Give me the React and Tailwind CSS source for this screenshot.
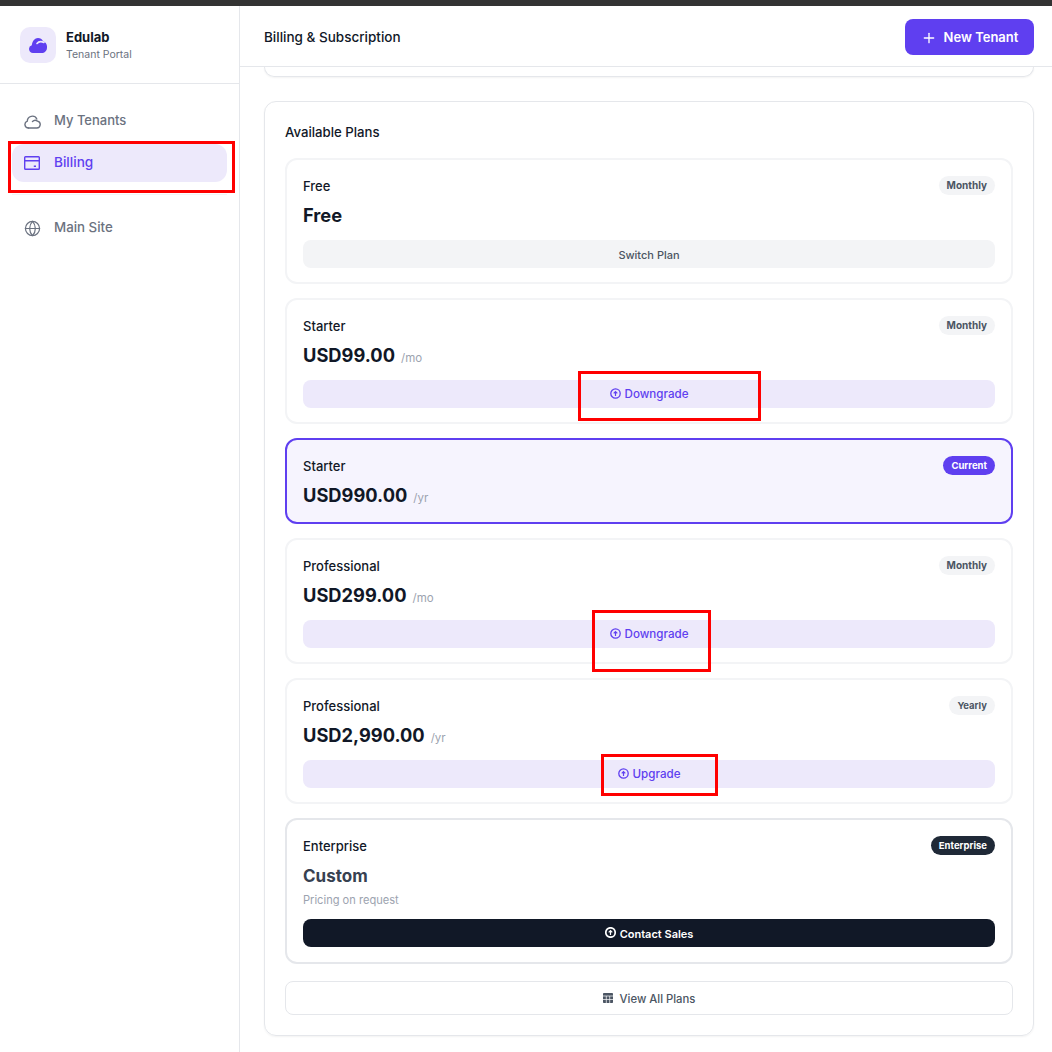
import { Globe, Plus } from 'lucide-react';

const plans = [
  { name: 'Free', price: 'Free', badge: 'Monthly', action: 'Switch Plan' },
  { name: 'Starter', price: 'USD99.00', per: '/mo', badge: 'Monthly', action: 'Downgrade' },
  { name: 'Starter', price: 'USD990.00', per: '/yr', badge: 'Current', current: true },
  { name: 'Professional', price: 'USD299.00', per: '/mo', badge: 'Monthly', action: 'Downgrade' },
  { name: 'Professional', price: 'USD2,990.00', per: '/yr', badge: 'Yearly', action: 'Upgrade' },
];

function LogoCloud() {
  return (
    <svg width="18" height="16" viewBox="0 0 18 16" className="text-[#5f3ff0]">
      <path fill="currentColor" d="M4 16a4 4 0 0 1-1.2-7.8C3.4 4 5.8 1 9 1c2.200 0 4 1.200 5 3.200A5.900 5.900 0 0 1 18 10a6 6 0 0 1-4 6z" />
      <path fill="none" stroke="#ede9fb" strokeWidth="1.6" strokeLinecap="round" d="M8 6.500C9.500 4.500 12 4 15 5.500" />
    </svg>
  );
}

function CloudOutline() {
  return (
    <svg width="17" height="15" viewBox="0 0 17 15" fill="none" stroke="#6b7280" strokeWidth="1.4" strokeLinecap="round" strokeLinejoin="round">
      <path d="M4.500 14H12.500A3.500 3.500 0 0 0 13.500 7.100A3.800 3.800 0 0 0 8.500 7.500" />
      <path d="M4.500 14A3.500 3.500 0 0 1 3.300 7.200A5 5 0 0 1 12.800 5" />
    </svg>
  );
}

function CardIcon() {
  return (
    <svg width="16" height="14" viewBox="0 0 16 14" fill="none" stroke="#5f3ff0" strokeWidth="1.400">
      <rect x="0.700" y="0.700" width="14.600" height="12.600" rx="0.800" />
      <path d="M1 4.800H15M9.800 10.200H12" />
    </svg>
  );
}

function UpCircle({ bold }) {
  return (
    <svg width="11" height="11" viewBox="0 0 11 11" fill="none" stroke="currentColor" strokeWidth={bold ? 1.700 : 1.300} className="mb-[3px] shrink-0">
      <circle cx="5.500" cy="5.500" r="4.700" />
      <path d="M5.500 8V3.500M3.700 5.300 5.500 3.500 7.300 5.300" strokeWidth="1.200" />
    </svg>
  );
}

function TableIcon() {
  return (
    <svg width="10" height="10" viewBox="0 0 10 10" className="mb-[2px] shrink-0">
      <rect width="10" height="10" rx="0.800" fill="#4b5563" />
      <path d="M0 3H10M0 6.500H10M3.300 3V10M6.700 3V10" stroke="#ffffff" strokeWidth="0.700" />
    </svg>
  );
}

function Badge({ plan }) {
  const size = plan.badge === 'Monthly' ? 'text-[10px]' : 'text-[9.5px]';
  return (
    <span className={`-mt-[1px] rounded-full px-2 h-[19px] leading-[19px] font-bold ${size} ${plan.current ? 'bg-[#5f3ff0] text-white' : 'bg-[#f3f4f6] text-[#4b5563]'}`}>
      {plan.badge}
    </span>
  );
}

function PlanCard({ plan }) {
  const isSwitch = plan.action === 'Switch Plan';
  return (
    <div className={`rounded-xl border-2 px-4 pt-[17px] ${plan.current ? 'border-[#5f3ff0] bg-[#f6f4fe] h-[86px]' : 'border-[#f3f4f6] bg-white h-[126px]'}`}>
      <div className="flex items-start justify-between h-[18px]">
        <span className="text-[13px] leading-[18px] font-medium text-[#111827]">{plan.name}</span>
        <Badge plan={plan} />
      </div>
      <div className="mt-[8px] h-[24px] flex items-baseline gap-[6px]">
        <span className="text-[18.300px] leading-[24px] font-bold text-[#111827]">{plan.price}</span>
        {plan.per && <span className="text-[11.500px] text-[#9ca3af]">{plan.per}</span>}
      </div>
      {plan.action && (
        <button className={`mt-[13px] w-full h-[28px] pt-[2px] rounded-lg flex items-center justify-center gap-1 font-medium ${isSwitch ? 'bg-[#f3f4f6] text-[#4b5563] text-[11px]' : 'bg-[#ede9fb] text-[#5f3ff0] text-[11.600px]'}`}>
          {!isSwitch && <UpCircle />}
          {plan.action}
        </button>
      )}
    </div>
  );
}

export default function App() {
  return (
    <div className="relative h-[1052px] overflow-hidden bg-white font-['Inter',sans-serif]">
      <div className="h-[6px] bg-[#333333]" />
      <div className="flex h-[1046px]">
        <aside className="w-[240px] shrink-0 border-r border-[#e5e7eb] bg-white">
          <div className="h-[78px] border-b border-[#e5e7eb] flex items-center gap-[10px] pl-5">
            <div className="w-9 h-9 rounded-[10px] bg-[#ede9fb] flex items-center justify-center">
              <LogoCloud />
            </div>
            <div>
              <div className="text-[13px] leading-[20px] font-bold text-[#111827]">Edulab</div>
              <div className="text-[10.500px] leading-[16px] text-[#6b7280]">Tenant Portal</div>
            </div>
          </div>
          <nav className="px-3 pt-[18px]">
            <a className="flex items-center gap-[13px] h-[38px] px-3 rounded-xl text-[13px] font-medium text-[#6b7280]">
              <CloudOutline />My Tenants
            </a>
            <a className="mt-[4px] flex items-center gap-[14px] h-[38px] pb-[1px] px-3 rounded-xl bg-[#ede9fb] text-[13.600px] font-medium text-[#5f3ff0]">
              <CardIcon />Billing
            </a>
            <div className="mt-[12px] border-t border-[#f3f4f6]" />
            <a className="mt-[14px] flex items-center gap-[13px] h-[38px] px-3 rounded-xl text-[13.300px] font-medium text-[#6b7280]">
              <Globe size={17} strokeWidth={1.700} />Main Site
            </a>
          </nav>
        </aside>
        <main className="flex-1 min-w-0">
          <header className="h-[61px] border-b border-[#e5e7eb] flex items-center justify-between pt-[2px] pl-6 pr-[18px]">
            <h1 className="text-[13.500px] font-medium text-[#111827]">Billing &amp; Subscription</h1>
            <button className="w-[129px] h-9 pt-[1px] rounded-lg bg-[#5f3ff0] text-white text-[13px] font-semibold flex items-center justify-center gap-[7px]">
              <Plus size={16} strokeWidth={2} />New Tenant
            </button>
          </header>
          <div className="pl-6 pr-[18px]">
            <div className="h-[10px] rounded-b-xl border border-t-0 border-[#e5e7eb] shadow-[0_1px_2px_rgba(0,0,0,0.05)]" />
            <section className="mt-[24px] h-[935px] rounded-xl border border-[#e5e7eb] shadow-[0_1px_2px_rgba(0,0,0,0.05)] px-5 pt-[20px]">
              <h2 className="text-[13.200px] leading-[20px] font-medium text-[#111827] mb-[16px]">Available Plans</h2>
              <div className="flex flex-col gap-[14px]">
                {plans.map((p, i) => <PlanCard key={i} plan={p} />)}
                <div className="h-[146px] rounded-xl border-2 border-[#e5e7eb] px-4 pt-[17px]">
                  <div className="flex items-start justify-between h-[18px]">
                    <span className="text-[13px] leading-[18px] font-medium text-[#111827]">Enterprise</span>
                    <span className="-mt-[1px] rounded-full bg-[#1f2937] px-2 h-[19px] leading-[19px] text-[9.500px] font-bold text-white">Enterprise</span>
                  </div>
                  <div className="mt-[9px] text-[17px] leading-[24px] font-bold text-[#374151]">Custom</div>
                  <div className="mt-[3px] text-[11.100px] leading-[18px] text-[#9ca3af]">Pricing on request</div>
                  <button className="mt-[10px] w-full h-[28px] pt-[2px] rounded-lg bg-[#111827] text-white text-[11px] font-semibold flex items-center justify-center gap-1">
                    <UpCircle bold />Contact Sales
                  </button>
                </div>
              </div>
              <button className="mt-[17px] w-full h-[34px] pt-[2px] rounded-lg border border-[#e5e7eb] text-[11.300px] font-medium text-[#4b5563] flex items-center justify-center gap-[7px]">
                <TableIcon />View All Plans
              </button>
            </section>
          </div>
        </main>
      </div>
      {/* red annotation boxes over the shot */}
      <div className="absolute left-[8px] top-[141px] w-[227px] h-[52px] border-[3px] border-[#ff0000]" />
      <div className="absolute left-[578px] top-[371px] w-[183px] h-[50px] border-[3px] border-[#ff0000]" />
      <div className="absolute left-[592px] top-[610px] w-[119px] h-[62px] border-[3px] border-[#ff0000]" />
      <div className="absolute left-[601px] top-[754px] w-[117px] h-[42px] border-[3px] border-[#ff0000]" />
    </div>
  );
}
